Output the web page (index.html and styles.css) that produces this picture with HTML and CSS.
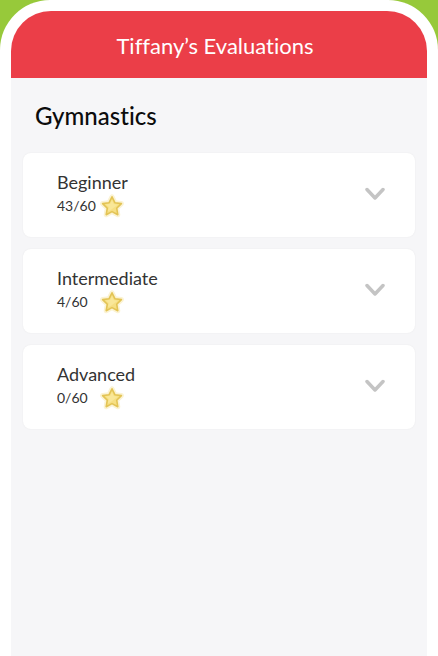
FILE: index.html
```
<!DOCTYPE html>
<html lang="en">
<head>
  <meta charset="UTF-8">
  <title>Tiffany’s Evaluations</title>
  <meta name="viewport" content="width=device-width, initial-scale=1.0">
  <link rel="stylesheet" href="styles.css">
</head>
<body>
  <svg width="0" height="0" class="sprite" aria-hidden="true">
    <symbol id="star" viewBox="0 0 24 24">
      <path d="M12 2.8l2.9 5.9 6.5.9-4.7 4.6 1.1 6.5-5.8-3.1-5.8 3.1 1.1-6.5-4.7-4.6 6.5-.9z" fill="#fbf0c8" stroke="#fbf3d4" stroke-width="5" stroke-linejoin="round"/>
      <path d="M12 2.8l2.9 5.9 6.5.9-4.7 4.6 1.1 6.5-5.8-3.1-5.8 3.1 1.1-6.5-4.7-4.6 6.5-.9z" fill="#f6df83" stroke="#e3c455" stroke-width="1.6" stroke-linejoin="round"/>
      <path d="M12 6l1.7 4 4.1.7-6.8 5-3 1.6.8-4.2-2.9-2.7 4.3-.6z" fill="#f9e798"/>
    </symbol>
    <symbol id="chevron" viewBox="0 0 20 14">
      <path d="M2 2.5L10 11l8-8.5" fill="none" stroke="#c4c4c4" stroke-width="3.5" stroke-linecap="round" stroke-linejoin="round"/>
    </symbol>
  </svg>

  <div class="frame">
    <div class="screen">
      <header class="top-bar">
        <h1>Tiffany’s Evaluations</h1>
      </header>

      <main class="content">
        <h2>Gymnastics</h2>

        <div class="levels">
          <button type="button" class="level" aria-expanded="false">
            <span class="level-info">
              <span class="level-name">Beginner</span>
              <span class="level-score">
                <span class="score">43/60</span>
                <svg class="star"><use href="#star"/></svg>
              </span>
            </span>
            <svg class="chevron"><use href="#chevron"/></svg>
          </button>

          <button type="button" class="level" aria-expanded="false">
            <span class="level-info">
              <span class="level-name">Intermediate</span>
              <span class="level-score">
                <span class="score">4/60</span>
                <svg class="star"><use href="#star"/></svg>
              </span>
            </span>
            <svg class="chevron"><use href="#chevron"/></svg>
          </button>

          <button type="button" class="level" aria-expanded="false">
            <span class="level-info">
              <span class="level-name">Advanced</span>
              <span class="level-score">
                <span class="score">0/60</span>
                <svg class="star"><use href="#star"/></svg>
              </span>
            </span>
            <svg class="chevron"><use href="#chevron"/></svg>
          </button>
        </div>
      </main>
    </div>
  </div>
</body>
</html>
```

FILE: styles.css
```
* {
  box-sizing: border-box;
}

body {
  margin: 0;
  background: #97c93a;
  font-family: Lato, "Open Sans", sans-serif;
  font-variant-ligatures: none;
  color: #333;
}

.sprite {
  display: none;
}

.frame {
  display: flex;
  min-height: 100vh;
  padding: 11px 11px 0;
  background: #fff;
  border-radius: 50px 50px 0 0;
}

.screen {
  flex: 1;
  background: #f6f6f8;
  border-radius: 40px 40px 0 0;
  overflow: hidden;
}

.top-bar {
  padding: 21px 24px 18px 16px;
  background: #eb3e48;
  color: #fff;
  text-align: center;
}

.top-bar h1 {
  margin: 0;
  font-size: 22px;
  font-weight: 400;
  line-height: 28px;
}

.content {
  padding: 23px 12px;
}

.content h2 {
  margin: 0 12px 22px;
  color: #0c0c0c;
  font-size: 24px;
  font-weight: 500;
  line-height: 30px;
}

.levels {
  display: flex;
  flex-direction: column;
  gap: 12px;
}

.level {
  display: flex;
  align-items: center;
  justify-content: space-between;
  width: 100%;
  padding: 17px 30px 19px 34px;
  background: #fff;
  border: 0;
  border-radius: 8px;
  box-shadow: 0 0 2px rgba(0, 0, 0, 0.06);
  color: inherit;
  font-family: inherit;
  text-align: left;
  cursor: pointer;
}

.level-info {
  display: flex;
  flex-direction: column;
}

.level-name {
  font-size: 18px;
  line-height: 24px;
}

.level-score {
  display: flex;
  align-items: center;
  font-size: 14px;
  line-height: 24px;
}

.score {
  width: 43px;
}

.star {
  width: 24px;
  height: 24px;
  overflow: visible;
}

.chevron {
  width: 20px;
  height: 14px;
}
```
